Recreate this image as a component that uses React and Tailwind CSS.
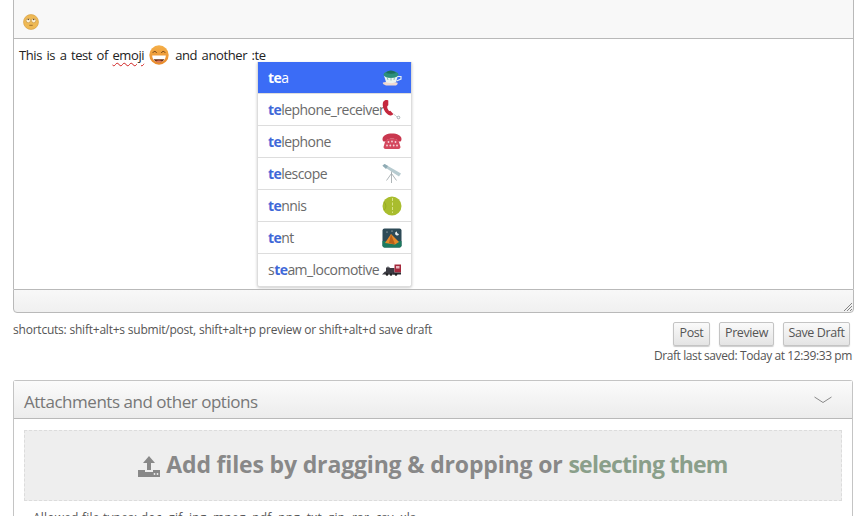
const FONT = "font-['Open_Sans','Noto_Sans',sans-serif]";

function RollEyes({ className }) {
  return (
    <svg viewBox="0 0 16 16" className={className}>
      <circle cx="8" cy="8" r="7.500" fill="#eeb955" stroke="#d39a3c" strokeWidth="0.6" />
      <circle cx="5.300" cy="6.600" r="2.100" fill="#fdf3dc" stroke="#a67a35" strokeWidth="0.4" />
      <circle cx="10.700" cy="6.600" r="2.100" fill="#fdf3dc" stroke="#a67a35" strokeWidth="0.4" />
      <circle cx="5.300" cy="5.500" r="0.800" fill="#6b4d22" />
      <circle cx="10.700" cy="5.500" r="0.800" fill="#6b4d22" />
      <path d="M6.300 11.300h3.400" stroke="#8a5e22" strokeWidth="0.8" fill="none" />
    </svg>
  );
}

function Grin({ className }) {
  return (
    <svg viewBox="0 0 20 20" className={className}>
      <defs>
        <linearGradient id="grinface" x1="0" y1="0" x2="0" y2="1">
          <stop offset="0" stopColor="#f4b04a" />
          <stop offset="1" stopColor="#ea8a2a" />
        </linearGradient>
      </defs>
      <circle cx="10" cy="10" r="9.700" fill="url(#grinface)" />
      <path d="M3.800 7.800c.8-1.800 3-1.800 3.800 0" stroke="#6b3f14" strokeWidth="1" fill="none" />
      <path d="M12.400 7.800c.8-1.800 3-1.800 3.800 0" stroke="#6b3f14" strokeWidth="1" fill="none" />
      <path d="M3.200 10.500h13.600c0 4.200-3 6.800-6.800 6.800s-6.800-2.600-6.800-6.800z" fill="#fff" />
      <path d="M4.600 14.200h10.800c-1.100 2-3 3.100-5.400 3.100s-4.300-1.100-5.400-3.100z" fill="#6a2f12" />
      <path d="M6.500 16.300c2-1 5-1 7 0-1 .7-2.200 1-3.500 1s-2.500-.3-3.500-1z" fill="#e3765c" />
    </svg>
  );
}

function Tea() {
  return (
    <svg viewBox="0 0 20 20" className="w-[20px] h-[20px]">
      <path d="M1 14.500c3-1 10-1 14 0 1.500.5 0 3-1.500 3H5c-2 0-5-2-4-3z" fill="#f0d9cf" />
      <path d="M2 7.500h14l-2 6.500c-2 1.500-8 1.500-10 0z" fill="#eaf4f2" />
      <ellipse cx="9" cy="6.500" rx="7.500" ry="3.500" fill="#2d8f7c" />
      <path d="M4 5c1.500-3.500 8-3.500 10 0-3 1-7 1-10 0z" fill="#1c6e5d" />
      <path d="M15.500 8.500h3.500v2.500l-4.500 2" fill="none" stroke="#e4eeee" strokeWidth="1.200" />
      <path d="M5 9l1 3M9 9.500v3M12.500 9l-.5 3" stroke="#5fae9f" strokeWidth="0.7" />
    </svg>
  );
}

function Receiver() {
  return (
    <svg viewBox="0 0 20 20" className="w-[20px] h-[20px]">
      <path d="M3.500 0c-2 .7-3 2.500-2.700 5.500.4 4 3.300 8.500 6.700 9.800 1.700.6 3.300 0 3.800-1.200l-3-3.400c-.8.5-1.400.3-2-.6-.9-1.300-1.300-2.600-1-3.800.1-.5.600-.8 1-1L6.300.5c-.9-.6-1.900-.8-2.800-.5z" fill="#c4283e" />
      <path d="M11.500 14c1.500.8 2.500 2 3.500 3" stroke="#9aa7a8" strokeWidth="0.6" fill="none" />
      <circle cx="16.500" cy="17.500" r="1.300" fill="none" stroke="#7d8f95" strokeWidth="0.7" />
    </svg>
  );
}

function Telephone() {
  return (
    <svg viewBox="0 0 20 20" className="w-[20px] h-[20px]">
      <path d="M.5 7C.5 3.500 5 1.500 10 1.500S19.500 3.500 19.500 7c0 1-.3 2-1 2.500H15V7.500c-2-1-8-1-10 0v2H1.500c-.7-.5-1-1.500-1-2.500z" fill="#c9384f" />
      <path d="M3 10c1-2 2-3 3-3h8c1 0 2 1 3 3l1.500 5c0 1-1 2-2 2h-13c-1 0-2-1-2-2z" fill="#d4485e" />
      <g fill="#f6d4d9">
        <circle cx="6.500" cy="10" r="0.900" /><circle cx="10" cy="9.500" r="0.900" /><circle cx="13.500" cy="10" r="0.900" />
        <circle cx="5" cy="13.500" r="0.900" /><circle cx="8.300" cy="13.500" r="0.900" /><circle cx="11.700" cy="13.500" r="0.900" /><circle cx="15" cy="13.500" r="0.900" />
      </g>
    </svg>
  );
}

function Telescope() {
  return (
    <svg viewBox="0 0 20 20" className="w-[20px] h-[20px]">
      <path d="M.5 1.800L2.500 0 19 9.500 17 12.500z" fill="#b7cbd0" />
      <path d="M.5 1.800L2.500 0l3.500 2-2 3z" fill="#8fabb4" />
      <path d="M9.500 7.500v11.500M9.500 9.500l-5 7M9.500 9.500l5 7" stroke="#9aa3a6" strokeWidth="0.8" fill="none" />
    </svg>
  );
}

function Tennis() {
  return (
    <svg viewBox="0 0 20 20" className="w-[20px] h-[20px]">
      <circle cx="10" cy="10" r="9.500" fill="#a9bd2e" />
      <path d="M10.500 2v15" stroke="#e4ec9c" strokeWidth="0.8" strokeDasharray="3 1.500" fill="none" />
      <path d="M2 6c2.500 2.500 2.500 6 0 8" stroke="#8ea01f" strokeWidth="0.7" fill="none" />
    </svg>
  );
}

function Tent() {
  return (
    <svg viewBox="0 0 20 20" className="w-[20px] h-[20px]">
      <rect width="19" height="19" x="0.500" y="0.500" rx="2" fill="#2d4a57" />
      <path d="M.5 13h19v4.500a2 2 0 0 1-2 2h-15a2 2 0 0 1-2-2z" fill="#1d7a5f" />
      <path d="M3 15l6-9 8 8-4 2.500z" fill="#e58a2a" />
      <path d="M9 6l-2 9 6 1.500z" fill="#b9601a" />
      <path d="M15 3.500a2 2 0 1 0 2 2.500 2 2 0 0 1-2-2.500z" fill="#e9eef0" />
      <circle cx="5" cy="4" r="0.500" fill="#fff" /><circle cx="10" cy="3" r="0.500" fill="#fff" />
    </svg>
  );
}

function Train() {
  return (
    <svg viewBox="0 0 20 20" className="w-[20px] h-[20px]">
      <path d="M0 14.500l3-3h1V7.500h1.500v-1h1v1H8V8h4.500v6.500z" fill="#3a3a42" />
      <rect x="12.500" y="4.500" width="6.500" height="8" fill="#a5283c" />
      <rect x="14" y="6" width="3.500" height="2.500" fill="#e7b8c0" />
      <rect x="11" y="12.500" width="8" height="2" fill="#2a2a30" />
      <circle cx="5" cy="14.500" r="1.300" fill="#222" /><circle cx="9" cy="14.500" r="1.300" fill="#222" /><circle cx="14" cy="14.500" r="1.300" fill="#222" />
    </svg>
  );
}

function Row({ pre, bold, post, Icon, active, last }) {
  return (
    <div className={`flex items-center justify-between h-[32px] pl-[10px] pr-[9px] text-[14px] ${last ? "" : "border-b border-[#dddddd]"} ${active ? "bg-[#3b6cf6] text-white" : "bg-white text-[#6a6a6a]"}`}>
      <span className="whitespace-nowrap tracking-[-0.55px]">
        {pre}
        <b className={active ? "font-bold text-white" : "font-bold text-[#3f68d8]"}>{bold}</b>
        {post}
      </span>
      <span className="shrink-0 -ml-[2px]"><Icon /></span>
    </div>
  );
}

function Btn({ children, w }) {
  return (
    <button className={`h-[24px] ${w} pb-[1px] rounded-[2px] border border-[#c4c4c4] bg-gradient-to-b from-[#fafafa] to-[#e4e4e4] shadow-[0_1px_1px_rgba(0,0,0,0.2)] text-[12.5px] tracking-[-0.4px] text-[#555555]`}>
      {children}
    </button>
  );
}

export default function App() {
  return (
    <div className={`relative w-[866px] h-[516px] overflow-hidden bg-white px-[13px] ${FONT}`}>
      <div className="w-[841px]">
        <div className="h-[39px] border-x border-b border-[#b9b9b9] bg-[#f8f8f8] pt-[14px] pl-[9px]">
          <RollEyes className="w-[16px] h-[16px]" />
        </div>
        <div className="relative h-[250px] border-x border-[#b9b9b9] bg-white pl-[5px] pt-[5px] text-[13px] leading-[22px] tracking-[-0.4px] [word-spacing:1.5px] text-[#222222]">
          <div className="flex items-center h-[22px]">
            <span className="whitespace-pre">This is a test of </span>
            <span className="underline decoration-wavy decoration-[#d02020] decoration-[1px] underline-offset-[2px]">emoji</span>
            <Grin className="w-[20px] h-[20px] ml-[5px] mr-[6px]" />
            <span className="whitespace-pre">and another :te</span>
          </div>
          <div className="absolute left-[243px] top-[23px] w-[155px] rounded-b-[3px] border border-t-0 border-[#dddddd] bg-white shadow-[0_1px_3px_rgba(0,0,0,0.2)] overflow-hidden [word-spacing:0]">
            <Row bold="te" post="a" Icon={Tea} active />
            <Row bold="te" post="lephone_receiver" Icon={Receiver} />
            <Row bold="te" post="lephone" Icon={Telephone} />
            <Row bold="te" post="lescope" Icon={Telescope} />
            <Row bold="te" post="nnis" Icon={Tennis} />
            <Row bold="te" post="nt" Icon={Tent} />
            <Row pre="s" bold="te" post="am_locomotive" Icon={Train} last />
          </div>
        </div>
        <div className="relative h-[24px] rounded-b-[4px] border border-[#b9b9b9] bg-gradient-to-b from-[#f8f8f8] to-[#f0f0f0]">
          <svg viewBox="0 0 8 8" className="absolute right-[1px] bottom-[1px] w-[8px] h-[8px]">
            <path d="M0 8L8 0M3 8L8 3M6 8L8 6" stroke="#777777" strokeWidth="0.9" />
          </svg>
        </div>

        <div className="flex justify-between mt-[8px] h-[25px]">
          <span className="text-[12px] leading-[18px] tracking-[-0.22px] text-[#555555]">shortcuts: shift+alt+s submit/post, shift+alt+p preview or shift+alt+d save draft</span>
          <div className="flex gap-[9px] mr-[4px] pt-[1px]">
            <Btn w="w-[37px]">Post</Btn>
            <Btn w="w-[55px]">Preview</Btn>
            <Btn w="w-[67px]">Save Draft</Btn>
          </div>
        </div>
        <div className="mt-[1px] text-right pr-[2px] text-[12px] leading-[18px] tracking-[-0.4px] text-[#555555]">Draft last saved: Today at 12:39:33 pm</div>

        <div className="mt-[15px] w-[840px] rounded-t-[3px] border-x border-t border-[#c4c4c4] h-[200px]">
          <div className="flex items-center justify-between h-[38px] border-b border-[#b9b9b9] bg-gradient-to-b from-[#fbfbfb] to-[#ececec] pl-[10px] pr-[20px] pt-[4px]">
            <span className="text-[17px] tracking-[-0.47px] text-[#777777]">Attachments and other options</span>
            <svg viewBox="0 0 18 8" className="w-[18px] h-[8px] -mt-[4px]"><path d="M0.500 1l8.500 5.500L17.500 1" fill="none" stroke="#888888" strokeWidth="1" /></svg>
          </div>
          <div className="px-[10px] pt-[11px]">
            <div className="flex items-center justify-center gap-[6px] h-[71px] pb-[3px] border border-dashed border-[#dcdcdc] bg-[#eeeeee] text-[23px] font-bold tracking-[-0.16px] text-[#888888]">
              <svg viewBox="0 0 22 22" className="w-[22px] h-[22px] mt-[3px]">
                <path d="M11 1l6 7h-4v7H9V8H5z" fill="#888888" />
                <path d="M0 15h7v2h8v-2h7v7H0z" fill="#888888" />
                <circle cx="16.500" cy="19" r="0.900" fill="#eeeeee" /><circle cx="19.500" cy="19" r="0.900" fill="#eeeeee" />
              </svg>
              <span>Add files by dragging &amp; dropping or <span className="text-[#8a9f8a] tracking-[-0.75px]">selecting them</span></span>
            </div>
            <div className="mt-[8px] pl-[9px] text-[12px] tracking-[0.2px] text-[#555555]">Allowed file types: doc, gif, jpg, mpeg, pdf, png, txt, zip, rar, csv, xls</div>
          </div>
        </div>
      </div>
    </div>
  );
}
